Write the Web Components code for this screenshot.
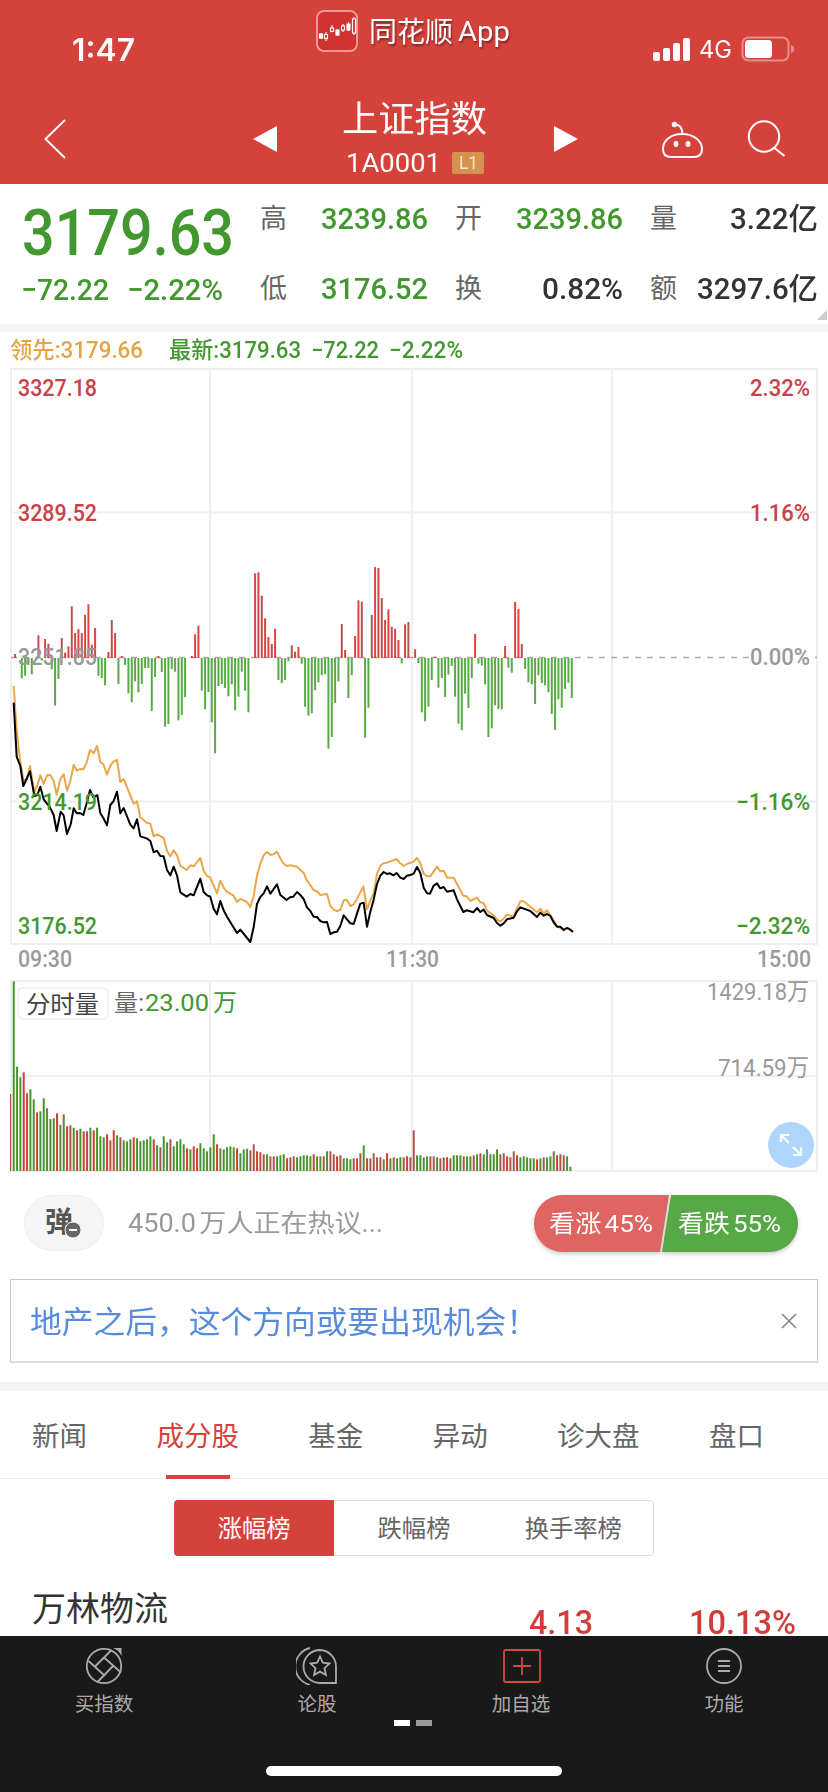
<!DOCTYPE html>
<html lang="zh-CN">
<head>
<meta charset="utf-8">
<title>上证指数</title>
<style>
html,body{margin:0;padding:0;background:#fff}
body{width:828px;height:1792px;overflow:hidden;font-family:Roboto,"Noto Sans CJK SC",sans-serif;line-height:1}
</style>
</head>
<body>
<quote-page></quote-page>
<script>
const define = (name, html, setup) => {
  const tpl = document.createElement('template');
  tpl.innerHTML = html;
  customElements.define(name, class extends HTMLElement {
    constructor() {
      super();
      this.attachShadow({ mode: 'open' }).appendChild(tpl.content.cloneNode(true));
    }
    connectedCallback() { if (setup) setup(this, this.shadowRoot); }
  });
};

/* Single line of text condensed or stretched to an exact width. */
define('fit-text', `<style>
:host{display:block;white-space:nowrap;line-height:var(--lh,1);height:calc(1em * var(--lh,1));flex:none}
span{display:inline-block;transform-origin:0 50%;line-height:var(--lh,1);vertical-align:top}
</style><span><slot></slot></span>`, (el, root) => {
  const w = +el.getAttribute('w'), s = root.querySelector('span');
  el.style.width = w + 'px';
  const n = s.getBoundingClientRect().width;
  if (n) s.style.transform = `scaleX(${w / n})`;
});

define('status-bar', `<style>
:host{display:grid;grid-template-columns:72px 244px 337px 1fr;height:78px;color:#fff;box-sizing:border-box;align-items:start}
.time{grid-column:2;font:600 31px/1 Inter;padding-top:34px}
.app{display:flex;gap:11px;padding-top:10px;align-items:flex-start}
.app fit-text{font-size:28px;margin-top:9px;text-shadow:1px 2px 2px #0006}
.app .en{margin-left:-6px;font-size:28px;margin-top:8px}
.right{display:flex;padding-top:36px;align-items:center;height:26px}
.right fit-text{font:400 24px/1 Inter;margin:2px 9px 0 8px}
svg{display:block;flex:none}
</style>
<div class="time"><fit-text w="63">1:47</fit-text></div>
<div class="app"><svg width="42" height="42" viewBox="0 0 42 42"><rect x="1" y="1" width="40" height="40" rx="7" fill="#cf3430" stroke="#ee9a94" stroke-width="2"/>
<g stroke="#fff" fill="none" stroke-width="1.1"><path d="M5 23v6M10 22v9M16 15v7M21.500 19v7M27 14v8M32.500 12v9M38 7v18"/><g fill="#cf3430"><rect x="8.500" y="24.500" width="3" height="4"/><rect x="14.500" y="18" width="3" height="3.500"/><rect x="25.500" y="16" width="3" height="4"/><rect x="36.500" y="9" width="3" height="14"/></g><g fill="#fff"><rect x="3.500" y="24" width="3" height="4"/><rect x="20" y="20" width="3" height="5"/><rect x="31" y="14" width="3" height="6"/></g></g></svg>
<fit-text w="84">同花顺</fit-text><fit-text class="en" w="52">App</fit-text></div>
<div class="right"><svg width="38" height="24" fill="#fff"><rect x="0" y="15" width="7" height="9" rx="2"/><rect x="10" y="11" width="7" height="13" rx="2"/><rect x="20" y="6" width="7" height="18" rx="2"/><rect x="30" y="1" width="7" height="23" rx="2"/></svg>
<fit-text w="33">4G</fit-text>
<svg width="54" height="26"><rect x="1.500" y="1.500" width="46" height="23" rx="6" fill="none" stroke="#e98f8b" stroke-width="2"/><rect x="4" y="4" width="27" height="18" rx="3.500" fill="#fff"/><path d="M50 9q3 1 3 4t-3 4z" fill="#e98f8b"/></svg></div>`);

define('title-bar', `<style>
:host{display:grid;grid-template-columns:240px 348px 240px;height:106px;color:#fff}
svg{display:block}
.mid{display:grid;grid-template-columns:50px 1fr 44px;align-items:start;justify-items:center}
.mid svg{margin-top:47px}
.t{display:flex;flex-direction:column;align-items:center;padding-top:24px;margin-left:-6px}
h1{margin:0;font-weight:400;font-size:36px;line-height:1}
.code{display:flex;align-items:center;gap:11px;margin-top:12px;margin-left:2px}
.code fit-text{font:400 26px/1 Roboto}
.badge{width:32px;height:22px;background:#d6934f;color:#fbe6c8;border-radius:2px;display:grid;place-items:center}
.badge fit-text{font:400 18px/1 Roboto}
</style>
<svg width="240" height="106" fill="none" stroke="#fff" stroke-width="2"><path d="M65 42 45.500 61 65 80"/></svg>
<div class="mid"><svg width="24" height="28"><path d="M0 14 24 1v26z" fill="#fff"/></svg>
<div class="t"><h1><fit-text w="145">上证指数</fit-text></h1><div class="code"><fit-text w="95">1A0001</fit-text><span class="badge"><fit-text w="19">L1</fit-text></span></div></div>
<svg width="24" height="28"><path d="M24 14 0 1v26z" fill="#fff"/></svg></div>
<svg width="240" height="106" fill="none" stroke="#fff" stroke-width="2"><path d="M86 46.500C91 46 94 49 94.500 56M94 56C106 56 114 63 114 71Q114 79 106 79H83Q75 79 75 71C75 63 82 56 94 56z"/><circle cx="86.500" cy="46.500" r="1.800" fill="#fff"/><g fill="#fff" stroke="none"><ellipse cx="88" cy="66" rx="2.400" ry="3"/><ellipse cx="100" cy="66" rx="2.400" ry="3"/></g><circle cx="176" cy="58.500" r="15.200"/><path d="M186.500 70 196.500 78"/></svg>`);

define('quote-panel', `<style>
:host{display:grid;grid-template-columns:239px 1fr 13px;height:139px;box-sizing:border-box;color:#42972f;background:#fff}
.price{padding:17px 0 0 22px}
.price .big{font-weight:500;font-size:65px}
.chg{display:flex;gap:18px;margin-top:9px;font-weight:500;font-size:30px;margin-left:-1px}
.grid{display:grid;grid-template-columns:195px 195px 167px;grid-template-rows:70px 70px;align-content:start;margin:0 0 0 21px}
.c{display:flex;align-items:center;justify-content:space-between;width:168px;font-size:30px;font-weight:500}
.c label{font-size:27px;color:#666;font-weight:400;padding-top:1px}
.d{color:#333}
.corner{align-self:end;justify-self:start;border:solid transparent;border-width:10px 0 0 10px;border-bottom:10px solid #ccc;border-top:0;margin-bottom:4px}
</style>
<div class="price"><fit-text class="big" w="212">3179.63</fit-text><div class="chg"><fit-text w="88">−72.22</fit-text><fit-text w="96">−2.22%</fit-text></div></div>
<div class="grid">
<div class="c"><label>高</label><fit-text w="107">3239.86</fit-text></div>
<div class="c"><label>开</label><fit-text w="107">3239.86</fit-text></div>
<div class="c d"><label>量</label><fit-text w="88">3.22亿</fit-text></div>
<div class="c"><label>低</label><fit-text w="107">3176.52</fit-text></div>
<div class="c d"><label>换</label><fit-text w="81">0.82%</fit-text></div>
<div class="c d"><label>额</label><fit-text w="121">3297.6亿</fit-text></div>
</div><i class="corner"></i>`);

define('chart-legend', `<style>
:host{display:flex;align-items:center;height:36px;padding-left:10px;font-size:23px;color:#42972f;font-weight:500}
.a{color:#e5a545;margin-right:26px}
.n{margin-right:10px}
</style><fit-text class="a" w="133">领先:3179.66</fit-text><fit-text class="n" w="132">最新:3179.63</fit-text><fit-text class="n" w="68">−72.22</fit-text><fit-text w="74">−2.22%</fit-text>`);

const DIFF = [342,0,415,407,375,403,0,286,362,297,311,388,497,417,294,338,319,199,279,267,279,224,193,314,264,407,414,436,336,240,279,432,348,375,460,487,424,457,432,384,384,513,411,348,396,560,552,387,395,541,525,471,0,348,283,257,452,508,456,547,640,438,432,444,469,433,511,470,395,452,517,0,100,97,167,235,291,312,266,420,429,420,364,316,335,321,371,500,527,520,451,427,406,403,626,591,489,424,252,330,474,405,288,181,185,593,503,225,81,84,174,240,208,260,266,300,370,253,246,0,328,369,517,544,500,420,350,443,414,471,404,378,470,551,571,461,504,414,282,371,377,433,591,565,496,507,508,318,383,398,186,207,312,387,427,433,492,406,429,436,457,522,570,478,503,447,428,474];
const DARK = new Set([14,17,20,29,74,77,83,98,104,107,110,113,118,152]);
const LAST = '41,-82 50,80 61,108 70,168 90,124 103,198 112,195 121,170 131,208 150,232 161,255 170,303 182,245 191,256 201,312 212,283 221,235 230,250 240,249 250,255 260,220 270,180 280,202 292,195 301,250 310,264 321,286 331,225 341,213 351,185 361,250 371,234 391,284 401,295 411,268 421,319 440,325 451,333 461,367 471,362 481,378 491,379 501,420 511,436 521,410 531,436 541,487 560,500 571,492 581,496 601,446 611,486 621,496 631,500 641,536 651,553 661,513 671,541 681,560 711,609 721,599 751,636 761,592 771,522 781,501 791,490 801,469 811,491 831,463 841,495 860,510 870,502 880,500 891,486 901,495 911,507 921,532 931,543 941,560 951,561 961,573 971,577 981,576 991,612 1001,607 1011,605 1021,588 1031,556 1041,568 1051,580 1061,582 1071,551 1081,521 1091,518 1101,590 1111,545 1121,509 1131,462 1141,437 1151,426 1161,432 1170,430 1180,436 1190,429 1201,443 1211,447 1221,437 1231,435 1241,431 1251,411 1261,429 1271,473 1281,490 1290,491 1301,467 1311,460 1321,475 1331,471 1341,485 1361,481 1371,508 1390,546 1400,541 1420,547 1431,534 1441,546 1451,539 1461,555 1481,564 1491,579 1501,587 1511,580 1521,568 1541,563 1551,544 1561,532 1591,543 1611,561 1621,548 1631,557 1641,552 1651,558 1661,577 1671,590 1681,590 1691,600 1701,594 1711,599 1719,606';
const LEAD = '41,-132 50,0 60,90 70,150 80,150 90,108 103,187 112,165 121,136 131,162 141,136 151,135 161,152 170,194 181,148 191,132 201,182 211,153 221,105 231,122 240,117 250,118 260,98 270,60 281,70 291,48 301,96 310,103 321,134 331,107 341,94 351,90 361,156 371,147 401,221 411,214 421,262 440,278 451,281 461,319 471,313 491,324 501,363 511,379 521,361 531,376 541,407 560,420 571,406 581,409 601,384 611,422 621,438 631,443 651,490 661,452 671,473 681,486 701,497 711,516 721,507 741,516 751,531 761,498 771,437 781,401 791,376 801,366 811,375 820,373 831,365 841,385 850,400 860,408 870,406 891,410 911,429 921,452 941,480 951,484 961,495 981,492 991,528 1001,539 1011,543 1021,540 1031,511 1041,510 1051,528 1061,523 1071,507 1090,469 1101,538 1111,511 1121,490 1131,432 1141,407 1151,399 1161,398 1190,387 1201,400 1211,408 1221,402 1241,395 1251,384 1261,400 1271,431 1281,439 1291,439 1311,410 1321,424 1331,422 1341,443 1361,443 1390,497 1400,499 1411,513 1431,503 1441,517 1451,519 1461,542 1481,556 1491,569 1501,574 1511,566 1521,554 1541,560 1551,536 1561,514 1571,514 1591,530 1611,547 1621,536 1631,551 1641,541 1651,555 1671,588 1691,600 1701,594 1719,604';

/* Minute chart: 1 unit = 1px, the top of the element is page row 368. */
define('minute-chart', `<style>:host{display:block;height:610px}svg{display:block}text{font:500 23px Roboto}</style>
<svg width="828" height="610" viewBox="0 368 828 610">
<g fill="none" stroke="#efefef" stroke-width="2"><path d="M11 369H817V944H11zM210 369V944M412 369V944M612 369V944M11 512.500H817M11 801.500H817"/></g>
<path d="M11 657.500H817" stroke="#aaa" stroke-width="1.300" stroke-dasharray="6 6"/>
<rect x="749" y="645" width="62" height="24" fill="#fff"/>
<g id="bars"></g><g id="labels"></g>
<g transform="translate(0 730) scale(.33333)" fill="none" stroke-width="6" stroke-linejoin="round"><polyline id="lead" stroke="#e8a849"/><polyline id="last" stroke="#000"/></g>
<g id="over"></g>
</svg>`, (el, root) => {
  root.getElementById('last').setAttribute('points', LAST);
  root.getElementById('lead').setAttribute('points', LEAD);
  let h = '';
  DIFF.forEach((v, i) => {
    if (!v) return;
    const x = 14.1 + i * 10 / 3, y = 540 + v / 3, up = v < 356;
    h += `<rect x="${x.toFixed(2)}" width="2" y="${Math.min(y, 658).toFixed(1)}" height="${Math.abs(y - 658).toFixed(1)}" fill="${up ? (DARK.has(i) ? '#b55350' : '#dc4440') : '#58ab44'}"/>`;
  });
  root.getElementById('bars').innerHTML = h;
  const t = (s, x, y, w, c, f = 500) => `<text x="${x}" y="${y + 8}" textLength="${w}" lengthAdjust="spacingAndGlyphs" fill="${c}" style="font-weight:${f}">${s}</text>`;
  const r = '#cc4145', g = '#42972f', k = '#999';
  root.getElementById('labels').innerHTML =
    t('3327.18', 18, 388, 79, r) + t('2.32%', 750, 388, 60, r) + t('3289.52', 18, 513, 79, r) + t('1.16%', 750, 513, 60, r) +
    t('3251.85', 18, 657, 79, k) + t('0.00%', 750, 657, 60, k) + t('−1.16%', 736, 801.5, 74, g) +
    t('3176.52', 18, 925.5, 79, g) + t('−2.32%', 736, 925.5, 74, g) +
    t('09:30', 18, 959, 54, k) + t('11:30', 386, 959, 53, k) + t('15:00', 757, 959, 54, k);
  root.getElementById('over').innerHTML = t('3214.19', 18, 801.5, 79, g);
});

const VOL = 'b372 g34 g290 g322 r307 r370 g358 g388 r427 g424 g385 g415 g447 g445 r430 g464 g433 r469 b466 g473 r481 g476 r484 r484 g473 r481 g473 g499 g502 r493 b511 r481 g496 b502 g511 g514 g508 r502 g505 g514 g511 g508 g499 r508 g526 b532 g499 g517 b508 g529 g514 g508 g523 r535 g538 r529 r535 g520 g535 g544 g532 g493 r523 g535 g538 g532 g529 g532 r535 g550 g538 g536 b541 b523 r544 b547 b553 g553 b559 b559 g559 g556 g553 r565 b562 b559 g562 g559 g556 g556 g559 r553 g559 g559 b559 g544 b544 b553 r559 b556 g565 g565 g568 b565 r565 b550 g526 r565 b565 b550 b562 b562 g568 r550 g565 b562 g565 g562 b562 r559 b562 b481 g556 g556 g562 g559 b559 b559 g562 b565 b562 r562 b565 g556 g556 g556 b559 g559 g559 b556 g553 b550 g553 g538 g553 g553 g538 b553 b550 r559 b562 b544 r556 g562 g559 g562 g565 g565 r568 g565 b562 g562 g559 g544 r556 b553 b556 g559 g590'.split(' ');

/* Volume chart: the top of the element is page row 978. */
define('volume-chart', `<style>:host{display:block;height:196px}svg{display:block}text{font:400 23px Roboto,"Noto Sans CJK SC"}</style>
<svg width="828" height="196" viewBox="0 978 828 196">
<path d="M11 981H817V1171H11zM210 981V1171M412 981V1171M612 981V1171M11 1076H817" fill="none" stroke="#efefef" stroke-width="2"/>
<g id="bars"></g>
<rect x="18" y="988" width="90" height="31" rx="5" fill="#fff" stroke="#f0f0f0" stroke-width="2"/>
<g id="labels"></g>
<circle cx="791" cy="1145" r="23" fill="#aed6fc"/>
<path d="M789 1143 781 1135M781 1142V1135H789M793 1147 801 1155M801 1147.500V1155H793" fill="none" stroke="#fff" stroke-width="2.200"/>
</svg>`, (el, root) => {
  const c = { r: '#d33c30', g: '#47942f', b: '#a9554a' };
  root.getElementById('bars').innerHTML = VOL.map((v, i) => {
    const y = 970 + v.slice(1) / 3;
    return `<rect x="${(9.2 + i * 10 / 3 + (i ? .2 : .8)).toFixed(2)}" width="${i ? 2 : 1.2}" y="${y.toFixed(1)}" height="${(1171 - y).toFixed(1)}" fill="${c[v[0]]}"/>`;
  }).join('');
  const t = (s, x, y, w, f, fs = 23) => `<text x="${x}" y="${y + 8}" textLength="${w}" lengthAdjust="spacingAndGlyphs" fill="${f}" style="font-size:${fs}px">${s}</text>`;
  root.getElementById('labels').innerHTML = t('分时量', 26, 1005, 73, '#444', 24) + t('量:', 114, 1003, 30, '#666') +
    t('23.00', 145, 1003, 64, '#42972f', 24) + t('万', 213, 1003, 24, '#42972f', 24) +
    t('1429.18万', 707, 992, 102, '#999', 24) + t('714.59万', 718, 1068, 91, '#999', 24);
});

define('debate-bar', `<style>
:host{display:flex;align-items:center;height:56px;padding:21px 30px 0 24px;color:#fff}
.pill{width:80px;height:56px;box-sizing:border-box;border-radius:28px;background:#f5f5f5;border:1px solid #eee}
.msg{font-size:25px;color:#999;font-weight:400;margin-left:24px;word-spacing:-3px}
svg{display:block}
.vote{display:grid;margin-left:auto;width:264px;height:57px}
.vote>*{grid-area:1/1}
.vote svg{overflow:visible;filter:drop-shadow(0 2px 2px #0003)}
.lab{z-index:1;display:flex;align-items:center;gap:25px;padding:1px 0 0 15px;font-size:24px;font-weight:400;word-spacing:-3px}
text{font:700 28px "Noto Sans CJK SC"}
</style>
<div class="pill"><svg width="78" height="54"><text x="20" y="36" textLength="28" fill="#555">弹</text><circle cx="48" cy="34" r="8" fill="#666" stroke="#f5f5f5"/><path d="M44 34h8" stroke="#fff" stroke-width="2"/></svg></div>
<fit-text class="msg" w="255">450.0 万人正在热议...</fit-text>
<div class="vote"><svg width="264" height="57"><path d="M28.500 0H135L126 57H28.500a28.500 28.500 0 0 1 0-57z" fill="#de6561"/><path d="M137 0H235.500a28.500 28.500 0 0 1 0 57H128z" fill="#57a946"/></svg>
<div class="lab"><fit-text w="104">看涨 45%</fit-text><fit-text w="103">看跌 55%</fit-text></div></div>`);

define('notice-box', `<style>
:host{display:flex;align-items:center;justify-content:space-between;box-sizing:border-box;height:84px;margin:28px 10px 0;padding:0 20px 0 19px;border:1px solid #c8c8c8;border-bottom:2px solid #ddd;font-size:31px;color:#598bdc;font-weight:400}
fit-text{margin-top:3px}
</style><fit-text w="508">地产之后，这个方向或要出现机会！</fit-text>
<svg width="16" height="16"><path d="M1 1 15 15M15 1 1 15" stroke="#888" stroke-width="1.700"/></svg>`);

define('tab-item', `<style>
:host{position:relative;font-size:27.500px;color:#666;font-weight:400;height:88px;display:flex;align-items:center;box-sizing:border-box;padding-top:3px}
:host([on]){color:#d5413b;justify-content:center}
:host([on])::after{content:"";position:absolute;width:64px;height:4px;background:#d5413b;bottom:0}
</style><slot></slot>`);
define('tab-strip', `<style>
:host{display:flex;height:88px;border-bottom:1px solid #ececec;padding:0 64px 0 32px;justify-content:space-between;box-sizing:border-box}
</style><tab-item>新闻</tab-item><tab-item on>成分股</tab-item><tab-item>基金</tab-item><tab-item>异动</tab-item><tab-item>诊大盘</tab-item><tab-item>盘口</tab-item>`);

define('seg-control', `<style>
:host{display:grid;grid-template-columns:repeat(3,1fr);width:480px;height:56px;margin:21px 0 0 174px;border:1px solid #ddd;box-sizing:border-box;border-radius:4px;font-size:24.300px;color:#666;font-weight:400}
span{display:grid;place-items:center;padding-top:2px}
.on{background:#d5413b;color:#fff;border-radius:4px 0 0 4px;margin:-1px 0 -1px -1px}
</style><span class="on">涨幅榜</span><span>跌幅榜</span><span>换手率榜</span>`);

define('stock-row', `<style>
:host{display:flex;height:80px;box-sizing:border-box;padding:0 32px;color:#d03d3b;font-weight:500;font-size:34px}
.name{color:#333;font-weight:400;margin-top:36px}
.p,.q{--lh:.74;margin-top:54px}
.p{margin-left:361px}
.q{margin-left:auto}
</style><fit-text class="name" w="136">万林物流</fit-text><fit-text class="p" w="64">4.13</fit-text><fit-text class="q" w="107">10.13%</fit-text>`);

define('tool-item', `<style>
:host{display:flex;flex-direction:column;align-items:center;gap:10px;color:#aaa;font-size:19.500px;font-weight:400;line-height:1}
</style><slot name="icon"></slot><span><slot></slot></span>`);
define('tool-bar', `<style>
:host{display:grid;grid-template-columns:208px 214px 198px 208px;grid-template-rows:84px 46px 26px;background:#191919;height:156px;flex:none}
tool-item{padding-top:11px}
svg{display:block;fill:none;stroke:#aaa;stroke-width:1.800}
.dots{grid-column:1/-1;display:flex;gap:6px;padding-left:394px}
.dots i{width:16px;height:6px;background:#999}
.dots i:first-child{background:#fff}
.home{grid-column:1/-1;width:296px;height:10px;background:#fff;border-radius:5px;margin-left:266px}
</style>
<tool-item><svg slot="icon" width="38" height="38"><circle cx="19" cy="19" r="17.200"/><path d="M26 3.500 9.500 20M3.500 14 20 29M36 25.500 19 10.500M12.500 35 28.500 18.500"/><path d="M28 1H36.500V9Q34 3 28 1" fill="#aaa" stroke="none"/></svg>买指数</tool-item>
<tool-item style="padding-left:4px"><svg slot="icon" width="42" height="38"><path d="M24 3A16.500 16.500 0 0 0 24 36H40V19.500A16.500 16.500 0 0 0 24 3zM14 1A19 19 0 0 0 14 38"/><path d="m24 9.500 2.800 6.200 6.700.8-5 4.700 1.400 6.800-5.900-3.400-5.900 3.400 1.400-6.800-5-4.700 6.700-.8z"/></svg>论股</tool-item>
<tool-item><svg slot="icon" width="40" height="38" style="stroke:#d9443e"><rect x="3" y="3" width="36" height="32" rx="1.500"/><path d="M12 19H30M21 10V28"/></svg>加自选</tool-item>
<tool-item><svg slot="icon" width="38" height="38"><circle cx="19" cy="19" r="17"/><path d="M13 14H25M13 19H25M13 24H25"/></svg>功能</tool-item>
<div class="dots"><i></i><i></i></div><div class="home"></div>`);

define('quote-page', `<style>
:host{display:flex;flex-direction:column;width:828px;height:1792px;background:#fff}
header{background:#d5413b;height:184px;flex:none}
.band{background:#f4f4f4;height:8px;flex:none}
.b2{height:9px;margin-top:19px}
quote-panel{height:140px;flex:none}
main{height:1452px;flex:none}
</style>
<header><status-bar></status-bar><title-bar></title-bar></header>
<main><quote-panel></quote-panel><div class="band"></div><chart-legend></chart-legend>
<minute-chart></minute-chart><volume-chart></volume-chart>
<debate-bar></debate-bar><notice-box></notice-box><div class="band b2"></div>
<tab-strip></tab-strip><seg-control></seg-control><stock-row></stock-row></main>
<tool-bar></tool-bar>`);
</script>
</body>
</html>
